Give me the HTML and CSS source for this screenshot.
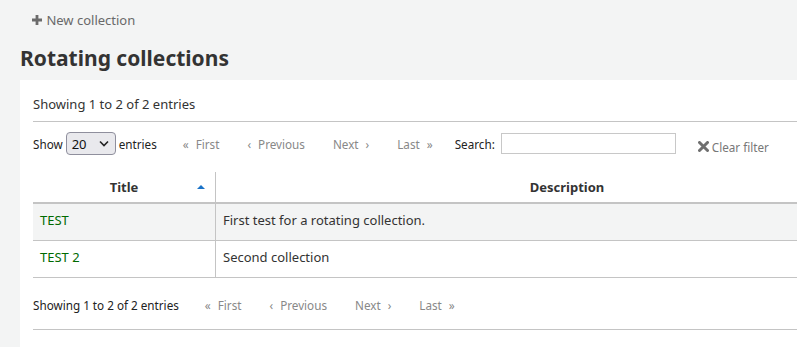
FILE: index.html
```html
<!DOCTYPE html>
<html>
<head>
    <meta charset="utf-8">
    <title>Rotating collections</title>
    <link rel="stylesheet" href="styles.css">
</head>

<body>
<div id="main">
    <div class="toolbar">
        <a class="btn_new" href="/cgi-bin/koha/rotating_collections/editCollections.pl?action=new">
            <svg class="plus_icon" width="10" height="10" viewBox="0 0 10 10"><path d="M3.6 0h2.8v3.6H10v2.8H6.4V10H3.6V6.4H0V3.6h3.6z" fill="#6b6b6b"/></svg>
            New collection
        </a>
    </div>

    <h1>Rotating collections</h1>

    <div class="page_section">
        <div class="info top_info">Showing 1 to 2 of 2 entries</div>

        <div class="controls">
            <div class="length">
                Show
                <span class="select_box">20
                    <svg width="10" height="7" viewBox="0 0 10 7"><path d="M1 1.5l4 4 4-4" fill="none" stroke="#222" stroke-width="1.6"/></svg>
                </span>
                entries
            </div>
            <div class="pager">
                <span class="page_btn"><i>&laquo;</i>First</span>
                <span class="page_btn"><i>&lsaquo;</i>Previous</span>
                <span class="page_btn">Next<i class="after">&rsaquo;</i></span>
                <span class="page_btn">Last<i class="after">&raquo;</i></span>
            </div>
            <div class="search">
                <label>Search:</label>
                <span class="search_input"></span>
            </div>
            <a class="clear_filter" href="/cgi-bin/koha/rotating_collections/rotatingCollections.pl">
                <svg width="11" height="11" viewBox="0 0 11 11"><path d="M1.5 1.5l8 8M9.5 1.5l-8 8" stroke="#707070" stroke-width="3" stroke-linecap="round"/></svg>
                Clear filter
            </a>
        </div>

        <table class="collections">
            <thead>
                <tr>
                    <th class="col_title">Title <span class="sort_up"></span></th>
                    <th class="col_desc">Description</th>
                </tr>
            </thead>
            <tbody>
                <tr class="odd">
                    <td><span class="title_link">TEST</span></td>
                    <td>First test for a rotating collection.</td>
                </tr>
                <tr>
                    <td><span class="title_link">TEST 2</span></td>
                    <td>Second collection</td>
                </tr>
            </tbody>
        </table>

        <div class="bottom">
            <div class="info">Showing 1 to 2 of 2 entries</div>
            <div class="pager">
                <span class="page_btn"><i>&laquo;</i>First</span>
                <span class="page_btn"><i>&lsaquo;</i>Previous</span>
                <span class="page_btn">Next<i class="after">&rsaquo;</i></span>
                <span class="page_btn">Last<i class="after">&raquo;</i></span>
            </div>
        </div>
    </div>
</div>
</body>
</html>
```

FILE: styles.css
```css
html,
body {
    overflow: hidden;
}

body {
    margin: 0;
    background-color: #f3f4f4;
    font-family: "Noto Sans", sans-serif;
    font-size: 13px;
    color: #333333;
}

div#main {
    padding: 0 0 0 20px;
    width: 930px;
}

div.toolbar {
    padding: 10px 0 0 12px;
    height: 20px;
}

a.btn_new {
    color: #696969;
    text-decoration: none;
    line-height: 20px;
}

svg.plus_icon {
    margin-right: 1px;
}

h1 {
    font-size: 21px;
    font-weight: bold;
    margin: 15px 0 0 0;
    line-height: 26px;
    height: 35px;
    color: #333333;
}

div.page_section {
    background-color: #ffffff;
    padding: 14px 13px 30px 13px;
}

div.info {
    line-height: 20px;
}

div.top_info {
    padding-bottom: 7px;
    border-bottom: 1px solid #c4c4c4;
}

div.controls {
    display: flex;
    align-items: center;
    margin-top: 10px;
    height: 23px;
    font-size: 11.7px;
}

div.length {
    display: flex;
    align-items: center;
    color: #222222;
}

span.select_box {
    display: inline-flex;
    align-items: center;
    justify-content: space-between;
    box-sizing: border-box;
    width: 50px;
    height: 23px;
    margin: 0 3px;
    padding: 0 6px 0 5px;
    border: 1px solid #8f8f9d;
    border-radius: 4px;
    background-color: #e9e9ed;
    color: #111111;
    font-size: 13px;
}

div.pager {
    display: flex;
    color: #888888;
}

div.controls div.pager {
    margin-left: 26px;
}

span.page_btn {
    margin-right: 28px;
}

span.page_btn i {
    font-style: normal;
    margin-right: 7px;
}

span.page_btn i.after {
    margin: 0 0 0 7px;
}

div.search {
    display: flex;
    align-items: center;
    margin-left: -6px;
}

div.search label {
    color: #222222;
    margin-right: 6px;
}

span.search_input {
    display: inline-block;
    box-sizing: border-box;
    width: 175px;
    height: 21px;
    border: 1px solid #c8c8c8;
}

a.clear_filter {
    margin-left: 22px;
    margin-top: 6px;
    color: #777777;
    text-decoration: none;
    display: flex;
    align-items: center;
}

a.clear_filter svg {
    margin-right: 3px;
}

table.collections {
    border-collapse: collapse;
    width: 885px;
    margin-top: 17px;
}

table.collections th {
    height: 30px;
    padding: 0;
    font-weight: bold;
    border-bottom: 2px solid #c4c4c4;
    text-align: center;
    position: relative;
}

table.collections th.col_title {
    width: 182px;
    border-right: 1px solid #c4c4c4;
}

span.sort_up {
    position: absolute;
    right: 10px;
    top: 13px;
    width: 0;
    height: 0;
    border-left: 4px solid transparent;
    border-right: 4px solid transparent;
    border-bottom: 4px solid #1a73c8;
}

table.collections td {
    height: 31px;
    padding: 0 7px 5px 7px;
    border-bottom: 1px solid #c4c4c4;
}

table.collections td:first-child {
    border-right: 1px solid #c4c4c4;
}

table.collections tr.odd td {
    background-color: #f3f4f4;
}

span.title_link {
    color: #006a00;
    cursor: pointer;
}

div.bottom {
    display: flex;
    align-items: center;
    padding: 17px 0 14px 0;
    border-bottom: 1px solid #c4c4c4;
    font-size: 11.7px;
}

div.bottom div.info {
    color: #222222;
}

div.bottom div.pager {
    margin-left: 26px;
}
```
